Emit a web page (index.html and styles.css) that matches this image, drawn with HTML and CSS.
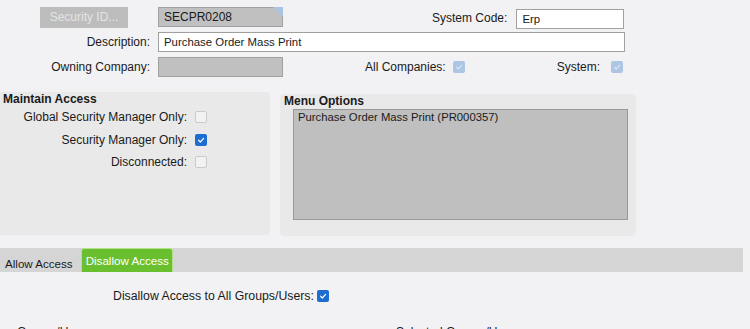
FILE: index.html
```html
<!DOCTYPE html>
<html>
<head>
<meta charset="utf-8">
<link rel="stylesheet" href="styles.css">
</head>
<body>
<div class="page">
  <div class="form">
    <div class="row row1">
      <div class="lbl"><span class="btn">Security ID...</span></div>
      <div class="field grey idfield">SECPR0208<span class="corner"></span></div>
      <div class="lbl syslbl">System Code:</div>
      <div class="field white sysfield">Erp</div>
    </div>
    <div class="row row2">
      <div class="lbl">Description:</div>
      <div class="field white descfield">Purchase Order Mass Print</div>
    </div>
    <div class="row row3">
      <div class="lbl">Owning Company:</div>
      <div class="field grey ownfield"></div>
      <div class="lbl alllbl">All Companies:</div>
      <span class="cb dis"><svg viewBox="0 0 12 12"><path d="M3.5 6.2 L5.3 8 L8.6 4.3" /></svg></span>
      <div class="lbl systemlbl">System:</div>
      <span class="cb dis"><svg viewBox="0 0 12 12"><path d="M3.5 6.2 L5.3 8 L8.6 4.3" /></svg></span>
    </div>
  </div>

  <div class="panels">
    <div class="panel maintain">
      <div class="ptitle">Maintain Access</div>
      <div class="crow"><span class="clbl">Global Security Manager Only:</span><span class="cb off"></span></div>
      <div class="crow"><span class="clbl">Security Manager Only:</span><span class="cb on"><svg viewBox="0 0 12 12"><path d="M3.5 6.2 L5.3 8 L8.6 4.3" /></svg></span></div>
      <div class="crow"><span class="clbl">Disconnected:</span><span class="cb off"></span></div>
    </div>
    <div class="panel menu">
      <div class="ptitle">Menu Options</div>
      <div class="listbox">Purchase Order Mass Print (PR000357)</div>
    </div>
  </div>

  <div class="tabs">
    <div class="tab">Allow Access</div>
    <div class="tab active">Disallow Access</div>
  </div>

  <div class="disrow">
    <span class="distext">Disallow Access to All Groups/Users:</span><span class="cb on"><svg viewBox="0 0 12 12"><path d="M3.5 6.2 L5.3 8 L8.6 4.3" /></svg></span>
  </div>

  <div class="lists">
    <div class="ltitle left">Groups/Users</div>
    <div class="ltitle right">Selected Groups/Users</div>
  </div>
</div>
</body>
</html>
```
FILE: styles.css
```css
html, body {
  margin: 0;
  padding: 0;
  background: #f2f2f4;
  font-family: "Liberation Sans", Arial, sans-serif;
  font-size: 12px;
  color: #1a1a1a;
  overflow: hidden;
}
.page {
  width: 750px;
  height: 329px;
  overflow: hidden;
}
.form {
  padding-top: 7px;
}
.row {
  display: flex;
  align-items: center;
}
.lbl {
  width: 150px;
  text-align: right;
  box-sizing: border-box;
  margin-right: 8px;
  white-space: nowrap;
}
.btn {
  display: inline-block;
  width: 88px;
  height: 21px;
  line-height: 21px;
  text-align: center;
  background: #bdbdbd;
  color: #e4e4e4;
  margin-right: 22px;
}
.field {
  box-sizing: border-box;
  height: 20px;
  line-height: 18px;
  padding-left: 5px;
  border: 1px solid #a0a0a0;
  position: relative;
  font-size: 11.4px;
  white-space: nowrap;
}
.field.grey { background: #c0c0c0; }
.field.white { background: #ffffff; }
.row1 { align-items: flex-start; height: 24px; }
.row1 .idfield { width: 125px; height: 20px; font-size: 12px; }
.corner {
  position: absolute;
  right: -1px;
  top: -1px;
  width: 0;
  height: 0;
  border-top: 10px solid #a9c3e2;
  border-left: 10px solid transparent;
}
.syslbl {
  width: auto;
  margin-left: 149px;
  margin-right: 9px;
  margin-top: 4px;
}
.sysfield {
  width: 108px;
  margin-top: 2px;
}
.row2 { margin-top: 1px; height: 20px; }
.descfield { width: 467px; }
.row3 { margin-top: 5px; height: 20px; }
.ownfield { width: 125px; }
.alllbl { width: auto; margin-left: 82px; margin-right: 7px; }
.systemlbl { width: auto; margin-left: 92px; margin-right: 11px; }

.cb {
  display: inline-block;
  width: 12px;
  height: 12px;
  box-sizing: border-box;
  border-radius: 2px;
  flex: none;
}
.cb svg { display: block; width: 12px; height: 12px; }
.cb path { fill: none; stroke: #fff; stroke-width: 1.2; stroke-linecap: round; stroke-linejoin: round; }
.cb.off { background: #f2f2f2; border: 1px solid #cacaca; }
.cb.on { background: #1d6cd0; }
.cb.dis { background: #adc6e3; }
.cb.dis path { stroke: #d9e5f3; }

.panels {
  display: flex;
  align-items: flex-start;
  margin-top: 15px;
}
.panel {
  background: #e9e9e9;
  box-sizing: border-box;
}
.maintain {
  width: 270px;
  height: 143px;
  border-radius: 0 4px 4px 0;
  padding: 1px 0 0 3px;
}
.menu {
  width: 356px;
  height: 142px;
  margin-left: 10px;
  margin-top: 2px;
  border-radius: 4px;
  padding: 1px 0 0 4px;
}
.ptitle {
  font-weight: bold;
  line-height: 13px;
}
.crow {
  display: flex;
  align-items: center;
  height: 22px;
}
.maintain .crow:nth-child(3) { margin-top: 1px; }
.clbl {
  width: 184px;
  text-align: right;
  margin-right: 8px;
}
.listbox {
  margin-left: 9px;
  margin-top: 1px;
  width: 335px;
  height: 111px;
  box-sizing: border-box;
  background: #bfbfbf;
  border: 1px solid #999999;
  padding: 0 0 0 4px;
  line-height: 14px;
  font-size: 11.3px;
}
.tabs {
  display: flex;
  align-items: stretch;
  margin-top: 12px;
  width: 743px;
  height: 24px;
  background: #d5d5d5;
}
.tab {
  padding: 9px 8px 0 5px;
  line-height: 13px;
  font-size: 11.6px;
  white-space: nowrap;
}
.tab.active {
  background: #6abf2f;
  color: #ffffff;
  border: 1px solid #b3e08e;
  border-bottom: none;
  border-radius: 3px 3px 0 0;
  padding: 5px 0 0 4px;
  width: 92px;
  box-sizing: border-box;
}
.disrow {
  display: flex;
  align-items: center;
  margin-top: 17px;
  padding-left: 113px;
  height: 14px;
}
.distext { margin-right: 3px; font-size: 12.3px; }
.lists {
  display: flex;
  margin-top: 22px;
}
.ltitle { line-height: 14px; white-space: nowrap; }
.ltitle.left { margin-left: 17px; width: 379px; }
```
